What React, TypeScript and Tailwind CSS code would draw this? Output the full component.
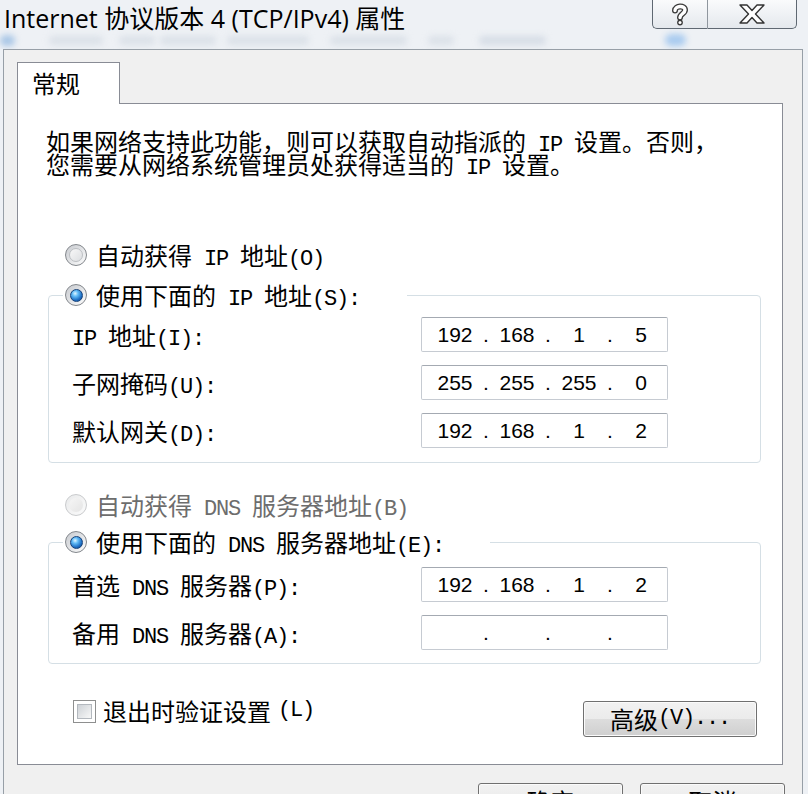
import React from 'react';

// splits a label into CJK runs and ASCII runs (ASCII drawn half-width, like SimSun)
function Txt({ s }: { s: string }) {
  const parts = s.split(/([ -~]+)/).filter(Boolean);
  return (
    <>
      {parts.map((p, i) =>
        /^[ -~]+$/.test(p) ? (
          <span key={i} className="whitespace-pre font-['Liberation_Mono',monospace] text-[22px] leading-[0] tracking-[-1.2px]">
            {p}
          </span>
        ) : (
          <span key={i}>{p}</span>
        )
      )}
    </>
  );
}

function Radio({ checked, disabled }: { checked?: boolean; disabled?: boolean }) {
  return (
    <span
      className={`flex h-[22px] w-[22px] shrink-0 items-center justify-center rounded-full border ${
        disabled
          ? 'border-[#c9cbcd] bg-[linear-gradient(135deg,#e9eaeb,#fbfbfb)]'
          : 'border-[#83878c] bg-[linear-gradient(135deg,#c7cacf,#fdfdfd)]'
      }`}
    >
      {checked ? (
        <span className="h-[13px] w-[13px] rounded-full border border-[#16427a] bg-[radial-gradient(circle_at_38%_32%,#e2f5ff_0%,#63bdf7_28%,#1f6fc4_65%,#0d3b78_100%)]" />
      ) : (
        <span
          className={`h-[14px] w-[14px] rounded-full ${
            disabled
              ? 'bg-[linear-gradient(135deg,#f6f6f6,#e4e4e4)]'
              : 'border border-[#bcbfc3] bg-[linear-gradient(135deg,#f8f8f8,#dcdee1)]'
          }`}
        />
      )}
    </span>
  );
}

function RadioRow({ label, checked, disabled }: { label: string; checked?: boolean; disabled?: boolean }) {
  return (
    <div className="flex h-[24px] items-center gap-[9px]">
      <Radio checked={checked} disabled={disabled} />
      <span className={`whitespace-nowrap ${disabled ? 'text-[#6d6d6d]' : 'text-black'}`}>
        <Txt s={label} />
      </span>
    </div>
  );
}

function IpBox({ parts }: { parts: string[] }) {
  return (
    <div className="flex h-[35px] w-[247px] items-center rounded-[2px] border border-[#c6cbd2] border-t-[#a4aab2] bg-white pl-[7px] font-['Liberation_Sans',sans-serif] text-[21px] leading-[24px] text-black">
      {parts.map((p, i) => (
        <React.Fragment key={i}>
          {i > 0 && <span className="w-[10px] text-center">.</span>}
          <span className="w-[52px] text-center">{p}</span>
        </React.Fragment>
      ))}
    </div>
  );
}

function FieldRow({ label, parts }: { label: string; parts: string[] }) {
  return (
    <div className="flex h-[35px] items-center">
      <span className="w-[349px] whitespace-nowrap">
        <Txt s={label} />
      </span>
      <IpBox parts={parts} />
    </div>
  );
}

function WinButton({ label, className }: { label: string; className: string }) {
  return (
    <button
      className={`flex h-[36px] items-center justify-center rounded-[3px] border border-[#707070] bg-[linear-gradient(#f2f2f2,#ebebeb_50%,#dddddd_50%,#cfcfcf)] text-black shadow-[inset_0_0_0_1px_#fbfbfb] ${className}`}
    >
      <Txt s={label} />
    </button>
  );
}

export default function App() {
  return (
    <div className="h-[794px] w-[808px] overflow-hidden bg-[#eef1f5] font-['Noto_Sans_CJK_SC',sans-serif] text-[24px] leading-[24px] text-black">
      {/* glass title bar */}
      <div className="flex h-[49px] flex-col overflow-hidden">
        <div className="flex items-start justify-between">
          <div className="whitespace-nowrap pl-[4px] pt-[3px] font-['Open_Sans','Noto_Sans_CJK_SC',sans-serif] text-[25px] leading-[30px] text-black">
            Internet 协议版本 4 (TCP/IPv4) 属性
          </div>
          <div className="mr-[11px] flex h-[29px]">
            <div className="flex w-[55px] items-center justify-center rounded-bl-[5px] border border-r-0 border-t-0 border-[#5f6872] bg-[linear-gradient(#fafbfc,#e4e8ed)]">
              <svg width="18" height="23" viewBox="0 0 18 23">
                <path d="M4 7.5C4 2.5 14 2 14 7C14 10.5 9 11 9 14.5" fill="none" stroke="#3b3b3b" strokeWidth="6" strokeLinecap="round" />
                <path d="M4 7.5C4 2.5 14 2 14 7C14 10.5 9 11 9 14.5" fill="none" stroke="#ffffff" strokeWidth="3.4" strokeLinecap="round" />
                <circle cx="9" cy="19.5" r="2.9" fill="#3b3b3b" />
                <circle cx="9" cy="19.5" r="1.5" fill="#ffffff" />
              </svg>
            </div>
            <div className="flex w-[90px] items-center justify-center rounded-br-[5px] border border-t-0 border-[#5f6872] border-l-[#8f969e] bg-[linear-gradient(#fafbfc,#e4e8ed)]">
              <svg width="26" height="20" viewBox="0 0 26 20">
                <polygon
                  points="1,1 8,1 13,6.5 18,1 25,1 16.5,10 25,19 18,19 13,13.5 8,19 1,19 9.5,10"
                  fill="#ffffff"
                  stroke="#333333"
                  strokeWidth="1.4"
                  strokeLinejoin="round"
                />
              </svg>
            </div>
          </div>
        </div>
        {/* blurred windows behind the glass */}
        <div className="mt-[1px] flex h-[12px] items-center blur-[3px]">
          <span className="h-[11px] w-[15px] rounded-full bg-[#a8c6e6]" />
          <span className="ml-[34px] h-[9px] w-[54px] rounded-full bg-[#dbe1e8]" />
          <span className="ml-[16px] h-[9px] w-[36px] rounded-full bg-[#dbe1e8]" />
          <span className="ml-[5px] h-[9px] w-[56px] rounded-full bg-[#dbe1e8]" />
          <span className="ml-[11px] h-[9px] w-[82px] rounded-full bg-[#dbe1e8]" />
          <span className="ml-[21px] h-[9px] w-[77px] rounded-full bg-[#dbe1e8]" />
          <span className="ml-[21px] h-[9px] w-[26px] rounded-full bg-[#dbe1e8]" />
          <span className="ml-[25px] h-[9px] w-[67px] rounded-full bg-[#d6dde6]" />
          <span className="ml-[119px] h-[12px] w-[21px] rounded-full bg-[#a9cbef]" />
        </div>
      </div>

      {/* window client area */}
      <div className="ml-[3px] mr-[5px] border border-[#979fa7] bg-[#f0f0f0] pl-[13px] pr-[17px] pt-[12px]">
        <div className="flex">
          <div className="relative z-10 -mb-px h-[42px] w-[103px] border border-b-0 border-[#898c95] bg-white pl-[14px] pt-[8px]">
            常规
          </div>
        </div>

        <div className="mr-[2px] border border-[#898c95] bg-white pb-[27px] pt-[25px]">
          <p className="ml-[28px] whitespace-nowrap leading-[23px]">
            <Txt s="如果网络支持此功能，则可以获取自动指派的 IP 设置。否则，" />
            <br />
            <Txt s="您需要从网络系统管理员处获得适当的 IP 设置。" />
          </p>

          <div className="ml-[47px] mt-[68px]">
            <RadioRow label="自动获得 IP 地址(O)" />
          </div>

          <fieldset className="ml-[30px] mr-[21px] mt-[16px] min-w-0 rounded-[4px] border border-[#d5dfe5] pb-[14px]">
            <legend className="ml-[14px] pl-[2px] pr-[47px]">
              <RadioRow label="使用下面的 IP 地址(S):" checked />
            </legend>
            <div className="flex flex-col gap-[13px] pl-[23px] pt-[10px]">
              <FieldRow label="IP 地址(I):" parts={['192', '168', '1', '5']} />
              <FieldRow label="子网掩码(U):" parts={['255', '255', '255', '0']} />
              <FieldRow label="默认网关(D):" parts={['192', '168', '1', '2']} />
            </div>
          </fieldset>

          <div className="ml-[47px] mt-[30px]">
            <RadioRow label="自动获得 DNS 服务器地址(B)" disabled />
          </div>

          <fieldset className="ml-[30px] mr-[21px] mt-[13px] min-w-0 rounded-[4px] border border-[#d5dfe5] pb-[13px]">
            <legend className="ml-[14px] pl-[2px] pr-[46px]">
              <RadioRow label="使用下面的 DNS 服务器地址(E):" checked />
            </legend>
            <div className="flex flex-col gap-[13px] pl-[23px] pt-[13px]">
              <FieldRow label="首选 DNS 服务器(P):" parts={['192', '168', '1', '2']} />
              <FieldRow label="备用 DNS 服务器(A):" parts={['', '', '', '']} />
            </div>
          </fieldset>

          <div className="ml-[55px] mr-[25px] mt-[37px] flex items-start justify-between">
            <label className="-mt-[2px] flex h-[24px] items-center gap-[7px] whitespace-nowrap">
              <span className="flex h-[23px] w-[23px] items-center justify-center border border-[#8e8f8f] bg-white">
                <span className="h-[15px] w-[15px] border border-[#b3b8be] bg-[linear-gradient(135deg,#cdd1d6,#f8f8f8)]" />
              </span>
              <Txt s="退出时验证设置(L)" />
            </label>
            <WinButton label="高级(V)..." className="w-[174px]" />
          </div>
        </div>

        <div className="mt-[18px] flex justify-end gap-[17px]">
          <WinButton label="确定" className="w-[145px]" />
          <WinButton label="取消" className="w-[145px]" />
        </div>
      </div>
    </div>
  );
}
